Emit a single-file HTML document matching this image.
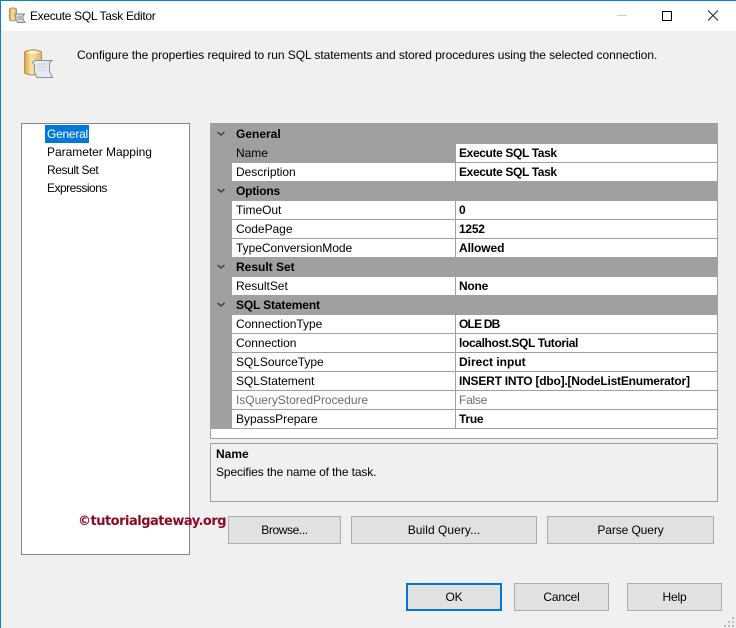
<!DOCTYPE html>
<html><head><meta charset="utf-8"><title>Execute SQL Task Editor</title>
<style>
html,body{margin:0;padding:0;width:736px;height:628px;overflow:hidden;background:#f0f0f0}
body{position:relative;font:12px/18px "Liberation Sans",sans-serif;color:#000}
.a{position:absolute;white-space:nowrap}
.line{position:absolute;background:#a0a0a0}
.row{position:absolute;left:232px;width:485px;height:18px;background:#fff}
.lb{position:absolute;left:236px;white-space:nowrap;letter-spacing:-.03px}
.vl{position:absolute;left:459px;white-space:nowrap;font-weight:bold;letter-spacing:-.25px}
.hd{position:absolute;left:236px;white-space:nowrap;font-weight:bold;letter-spacing:0}
.btn{position:absolute;box-sizing:border-box;background:#e1e1e1;border:1px solid #adadad;text-align:center;height:28px;line-height:26px;letter-spacing:-.2px}
</style></head><body>
<div class="a" style="left:0;top:0;width:736px;height:1px;background:#0a7fdc"></div>
<div class="a" style="left:0;top:1px;width:736px;height:30px;background:#fff"></div>
<div class="a" style="left:0;top:0;width:1px;height:628px;background:#0a7fdc"></div>
<svg class="a" style="left:8px;top:6px" width="18" height="18" viewBox="0 0 18 18"><defs><linearGradient id="g1" x1="0" x2="1" y1="0" y2="0"><stop offset="0" stop-color="#d9a94f"/><stop offset=".45" stop-color="#f6dfa2"/><stop offset="1" stop-color="#d8ae5d"/></linearGradient></defs><path d="M1.500 3Q5 .8 8.500 3V14Q5 16 1.500 14Z" fill="url(#g1)" stroke="#b3914f"/><path d="M8 8H16.500L15 10V13.500L17 16.500H10L8 14V11L6.800 9.500Z" fill="#d7dbe0" stroke="#7d8590"/><path d="M9.500 11H13.500M10 13H14" stroke="#8d949e"/></svg>
<div class="a" style="left:30px;top:7px;letter-spacing:-.32px">Execute SQL Task Editor</div>
<svg class="a" style="left:610px;top:5px" width="116" height="22" viewBox="0 0 116 22"><path d="M7 10.500H17" stroke="#ccc"/><path d="M52.500 6.500H61.500V15.500H52.500Z" fill="none" stroke="#000"/><path d="M98 5.500L108 15.500M108 5.500L98 15.500" stroke="#222" fill="none"/></svg>

<svg class="a" style="left:22px;top:47px" width="32" height="33" viewBox="0 0 32 33"><defs><linearGradient id="g2" x1="0" x2="1" y1="0" y2="0"><stop offset="0" stop-color="#d9a443"/><stop offset=".4" stop-color="#f9e4a6"/><stop offset="1" stop-color="#dcb466"/></linearGradient></defs><path d="M2.500 5Q11 .5 19.500 5V26Q11 30 2.500 26Z" fill="url(#g2)" stroke="#b9924a"/><path d="M4 5.500Q11 2.500 18 5.500Q11 8 4 5.500Z" fill="#fff3cc"/><path d="M13 13.500H30L27.500 15.500V24L30.500 30.500H15L12.500 25.500V18L10.500 15.500Z" fill="#e6e9ee" stroke="#8a929e"/><path d="M15 17H25M15 20H25M16 23H25" stroke="#cfd4db"/></svg>
<div class="a" style="left:77px;top:46px;letter-spacing:-.065px">Configure the properties required to run SQL statements and stored procedures using the selected connection.</div>

<div class="a" style="left:21px;top:123px;width:167px;height:430px;background:#fff;border:1px solid #82878c"></div>
<div class="a" style="left:45px;top:125px;width:44px;height:18px;background:#0078d7"></div>
<div class="a" style="left:47px;top:125px;color:#fff;letter-spacing:-.25px">General</div>
<div class="a" style="left:47px;top:143px;letter-spacing:-.03px">Parameter Mapping</div>
<div class="a" style="left:47px;top:161px;letter-spacing:-.4px">Result Set</div>
<div class="a" style="left:47px;top:179px;letter-spacing:-.5px">Expressions</div>

<!-- grid -->
<div class="a" style="left:210px;top:123px;width:508px;height:316px;background:#a0a0a0"></div>
<div class="a" style="left:211px;top:429px;width:506px;height:9px;background:#fff"></div>

<div class="row" style="left:456px;width:261px;top:144px"></div>
<div class="row" style="top:163px"></div>
<div class="row" style="top:201px"></div>
<div class="row" style="top:220px"></div>
<div class="row" style="top:239px"></div>
<div class="row" style="top:277px"></div>
<div class="row" style="top:315px"></div>
<div class="row" style="top:334px"></div>
<div class="row" style="top:353px"></div>
<div class="row" style="top:372px"></div>
<div class="row" style="top:391px"></div>
<div class="row" style="top:410px"></div>
<div class="line" style="left:455px;top:163px;width:1px;height:18px"></div>
<div class="line" style="left:455px;top:201px;width:1px;height:56px"></div>
<div class="line" style="left:455px;top:277px;width:1px;height:18px"></div>
<div class="line" style="left:455px;top:315px;width:1px;height:113px"></div>

<svg class="a" style="left:210px;top:123px" width="22" height="200" viewBox="0 0 22 200"><g fill="none" stroke="#444" stroke-width="1.500"><path d="M7.500 9L11 12L14.500 9"/><path d="M7.500 66L11 69L14.500 66"/><path d="M7.500 142L11 145L14.500 142"/><path d="M7.500 180L11 183L14.500 180"/></g></svg>

<div class="hd" style="top:125px">General</div>
<div class="lb" style="top:144px">Name</div><div class="vl" style="top:144px;letter-spacing:-.37px">Execute SQL Task</div>
<div class="lb" style="top:163px">Description</div><div class="vl" style="top:163px;letter-spacing:-.37px">Execute SQL Task</div>
<div class="hd" style="top:182px;letter-spacing:-.2px">Options</div>
<div class="lb" style="top:201px">TimeOut</div><div class="vl" style="top:201px">0</div>
<div class="lb" style="top:220px">CodePage</div><div class="vl" style="top:220px">1252</div>
<div class="lb" style="top:239px">TypeConversionMode</div><div class="vl" style="top:239px;letter-spacing:-.1px">Allowed</div>
<div class="hd" style="top:258px">Result Set</div>
<div class="lb" style="top:277px">ResultSet</div><div class="vl" style="top:277px">None</div>
<div class="hd" style="top:296px;letter-spacing:-.15px">SQL Statement</div>
<div class="lb" style="top:315px">ConnectionType</div><div class="vl" style="top:315px;letter-spacing:-.8px">OLE DB</div>
<div class="lb" style="top:334px">Connection</div><div class="vl" style="top:334px;letter-spacing:-.36px">localhost.SQL Tutorial</div>
<div class="lb" style="top:353px">SQLSourceType</div><div class="vl" style="top:353px;letter-spacing:0">Direct input</div>
<div class="lb" style="top:372px">SQLStatement</div><div class="vl" style="top:372px;letter-spacing:-.22px">INSERT INTO [dbo].[NodeListEnumerator]</div>
<div class="lb" style="top:391px;color:#6d6d6d">IsQueryStoredProcedure</div><div class="vl" style="top:391px;color:#6d6d6d;font-weight:normal">False</div>
<div class="lb" style="top:410px">BypassPrepare</div><div class="vl" style="top:410px">True</div>

<div class="a" style="left:210px;top:443px;width:506px;height:57px;border:1px solid #a0a0a0"></div>
<div class="a" style="left:216px;top:445px;font-weight:bold">Name</div>
<div class="a" style="left:216px;top:463px;letter-spacing:-.12px">Specifies the name of the task.</div>

<div class="btn" style="left:228px;top:516px;width:113px;letter-spacing:-.4px">Browse...</div>
<div class="btn" style="left:351px;top:516px;width:186px;letter-spacing:.05px">Build Query...</div>
<div class="btn" style="left:547px;top:516px;width:167px;letter-spacing:-.1px">Parse Query</div>
<div class="a" style="left:78px;top:512px;font:bold 13px/20px 'DejaVu Sans',sans-serif;color:#8b0a24;letter-spacing:-.5px">©tutorialgateway.org</div>

<div class="btn" style="left:406px;top:583px;width:96px;border:2px solid #0078d7;line-height:24px">OK</div>
<div class="btn" style="left:514px;top:583px;width:95px">Cancel</div>
<div class="btn" style="left:627px;top:583px;width:95px">Help</div>
<svg class="a" style="left:724px;top:616px" width="12" height="12"><g fill="#b8b8b8"><rect x="8" y="1" width="2" height="2"/><rect x="4" y="5" width="2" height="2"/><rect x="8" y="5" width="2" height="2"/><rect x="0" y="9" width="2" height="2"/><rect x="4" y="9" width="2" height="2"/><rect x="8" y="9" width="2" height="2"/></g></svg>
</body></html>
